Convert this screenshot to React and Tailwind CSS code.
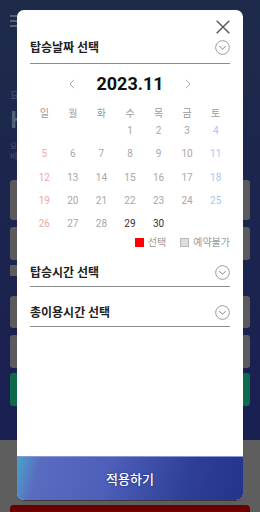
import React from 'react';

const weekdays = ['일', '월', '화', '수', '목', '금', '토'];
const weeks = [
    [null, null, null, 1, 2, 3, 4],
    [5, 6, 7, 8, 9, 10, 11],
    [12, 13, 14, 15, 16, 17, 18],
    [19, 20, 21, 22, 23, 24, 25],
    [26, 27, 28, 29, 30, null, null],
];

function ChevronCircle() {
    return (
        <svg width="15" height="15" viewBox="0 0 16 16" fill="none">
            <circle cx="8" cy="8" r="7.3" stroke="#8a8a8a" strokeWidth="0.9" />
            <path d="M4.8 6.8 L8 9.8 L11.2 6.8" stroke="#6a6a6a" strokeWidth="0.9" strokeLinecap="round" strokeLinejoin="round" />
        </svg>
    );
}

function dayColor(d, col) {
    if (d === 29 || d === 30) return 'text-[#333333]';
    if (col === 0) return 'text-[#f2a7a7]';
    if (col === 6) return 'text-[#9fc9f2]';
    return 'text-[#a8a8a8]';
}

export default function App() {
    return (
        <div className="relative w-[260px] h-[512px] overflow-hidden font-['Noto_Sans_CJK_KR',sans-serif]">
            {/* dimmed page behind the modal */}
            <div className="h-[440px] bg-gradient-to-b from-[#1e2a4a] to-[#1a1f52] px-[10px] flex flex-col">
                <div className="mt-[15px] flex flex-col gap-[3px] w-[7px]">
                    <div className="h-[2px] bg-[#5a6078]" />
                    <div className="h-[2px] bg-[#5a6078]" />
                    <div className="h-[2px] bg-[#5a6078]" />
                </div>
                <div className="mt-[63px] h-[10px] text-[10px] leading-[10px] text-[#4a5270]">요</div>
                <div className="mt-[8px] h-[20px] text-[22px] font-bold leading-[20px] text-[#5a6078]">H</div>
                <div className="mt-[13px] text-[8px] leading-[10px] text-[#4a5270]">요<br />비</div>
                <div className="mt-[19px] h-[40px] rounded-[3px] bg-[#5b5b5d]" />
                <div className="mt-[7px] h-[33px] rounded-[3px] bg-[#5b5b5d]" />
                <div className="mt-[5px] h-[11px] w-[8px] bg-[#5b5b5d]" />
                <div className="mt-[20px] h-[32px] rounded-[3px] bg-[#5b5b5d]" />
                <div className="mt-[7px] h-[33px] rounded-[3px] bg-[#5b5b5d]" />
                <div className="mt-[5px] h-[33px] rounded-[3px] bg-[#0e6a4d]" />
            </div>
            <div className="h-[72px] bg-[#5e5e5e] px-[10px] pt-[65px]">
                <div className="h-[7px] rounded-t-[4px] bg-[#6b0000]" />
            </div>

            {/* modal */}
            <div className="absolute left-[17px] top-[10px] w-[226px] h-[491px] rounded-[7px] overflow-hidden bg-white flex flex-col border-b border-[#3a3a3a]">
                <div className="flex-1 px-[13px]">
                    <div className="flex justify-end pt-[10px]">
                        <svg width="14" height="14" viewBox="0 0 14 14" fill="none">
                            <path d="M0.7 0.7 L13.3 13.3 M13.3 0.7 L0.7 13.3" stroke="#555555" strokeWidth="1.4" />
                        </svg>
                    </div>
                    <div className="mt-[3px] flex items-center justify-between pb-[6px] border-b border-[#8c8c8c]">
                        <span className="text-[12px] font-bold text-[#222222] leading-[20px]">탑승날짜 선택</span>
                        <ChevronCircle />
                    </div>

                    <div className="mt-[10px] h-[19px] flex items-center justify-center">
                        <svg width="6" height="10" viewBox="0 0 6 10" fill="none">
                            <path d="M5 0.8 L1 5 L5 9.2" stroke="#a8a8a8" strokeWidth="1" />
                        </svg>
                        <span className="mx-[21px] text-[18px] font-bold text-[#111111] leading-none font-['Roboto',sans-serif]">2023.11</span>
                        <svg width="6" height="10" viewBox="0 0 6 10" fill="none">
                            <path d="M1 0.8 L5 5 L1 9.2" stroke="#a8a8a8" strokeWidth="1" />
                        </svg>
                    </div>

                    <div className="mt-[14px] grid grid-cols-7 text-center text-[10px] leading-[12px] text-[#9a9a9a]">
                        {weekdays.map((w) => (
                            <span key={w}>{w}</span>
                        ))}
                    </div>
                    <div className="flex flex-col">
                        {weeks.map((week, i) => (
                            <div key={i} className="grid grid-cols-7 text-center text-[10px] leading-[23.3px] font-['Roboto',sans-serif]">
                                {week.map((d, j) => (
                                    <span key={j} className={dayColor(d, j)}>{d ?? ''}</span>
                                ))}
                            </div>
                        ))}
                    </div>
                    <div className="mt-[1px] flex items-center justify-end gap-[14px] text-[10px] leading-[12px] text-[#9a9a9a]">
                        <div className="flex items-center gap-[4px]">
                            <div className="w-[9px] h-[9px] bg-[#ff0000]" />
                            <span>선택</span>
                        </div>
                        <div className="flex items-center gap-[4px]">
                            <div className="w-[9px] h-[9px] bg-[#dddddd] border border-[#b8b8b8]" />
                            <span>예약불가</span>
                        </div>
                    </div>

                    <div className="mt-[14px] flex items-center justify-between pb-[4px] border-b border-[#8c8c8c]">
                        <span className="text-[12px] font-bold text-[#222222] leading-[20px]">탑승시간 선택</span>
                        <ChevronCircle />
                    </div>
                    <div className="mt-[15px] flex items-center justify-between pb-[4px] border-b border-[#8c8c8c]">
                        <span className="text-[12px] font-bold text-[#222222] leading-[20px]">총이용시간 선택</span>
                        <ChevronCircle />
                    </div>
                </div>
                <button className="h-[44px] shrink-0 border-t border-[#8a97d6] bg-[linear-gradient(105deg,#4aa3c9_0%,#5a6cc1_10%,#4d5fb8_40%,#2e3f98_75%,#24338c_100%)] text-white text-[13px] font-medium [text-shadow:0_0_2px_rgba(10,20,80,0.8)]">
                    적용하기
                </button>
            </div>
        </div>
    );
}
